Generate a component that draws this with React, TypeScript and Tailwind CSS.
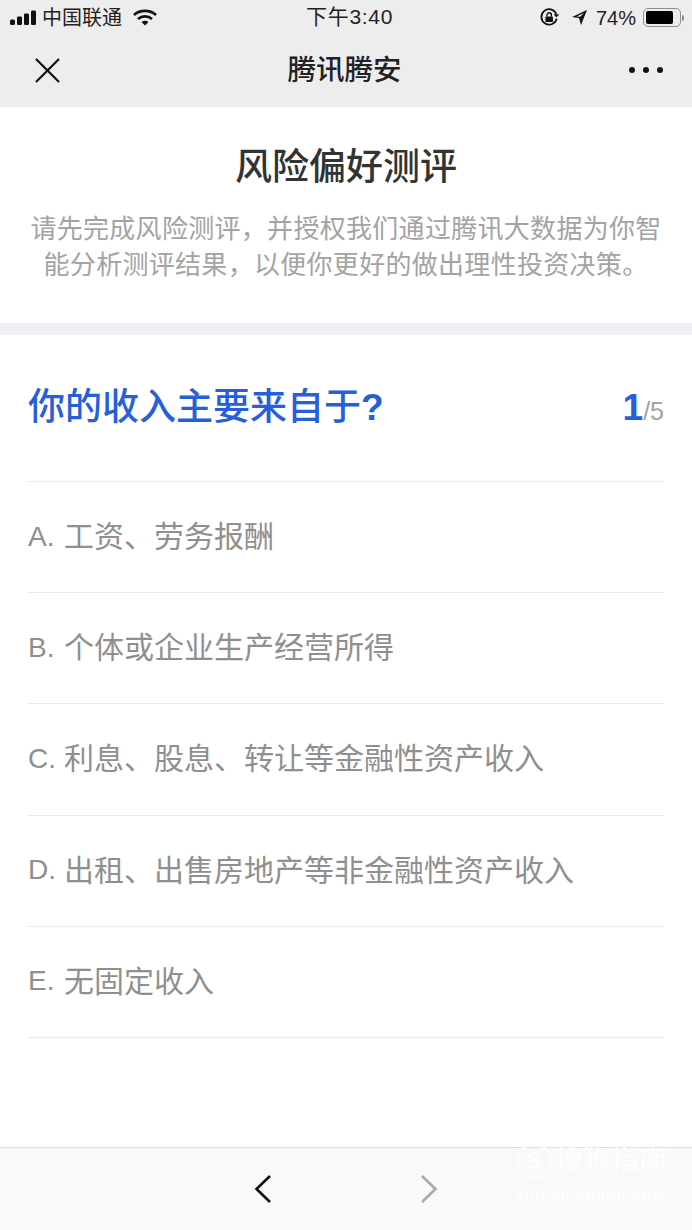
const FONT = '"Liberation Sans", "Noto Sans CJK SC", sans-serif';

const options = [
  ['A.', '工资、劳务报酬'],
  ['B.', '个体或企业生产经营所得'],
  ['C.', '利息、股息、转让等金融性资产收入'],
  ['D.', '出租、出售房地产等非金融性资产收入'],
  ['E.', '无固定收入'],
];

function StatusBar() {
  return (
    <div className="relative flex h-[35px] items-center justify-between pl-[10px] pr-[8px] text-[#1c1c1c]">
      <div className="flex items-center">
        <svg width="27" height="16" viewBox="0 0 27 16" className="block">
          <rect x="0" y="9.5" width="5" height="5.5" rx="1.6" fill="#111" />
          <rect x="7" y="6.5" width="5" height="8.5" rx="1.3" fill="#111" />
          <rect x="14" y="3.5" width="5" height="11.5" rx="1.3" fill="#111" />
          <rect x="21" y="0.5" width="5" height="14.5" rx="1.3" fill="#111" />
        </svg>
        <span className="ml-[5px] text-[20px] leading-none text-[#222]">中国联通</span>
        <svg width="24" height="17" viewBox="0 0 24 17" className="ml-[11px] block">
          <path d="M1 6 C7 0.5 17 0.5 23 6" fill="none" stroke="#111" strokeWidth="2.8" />
          <path d="M5 10 C9 6.5 15 6.5 19 10" fill="none" stroke="#111" strokeWidth="2.8" />
          <path d="M8.5 13 C10.5 11.2 13.5 11.2 15.5 13 L12 16.5 Z" fill="#111" />
        </svg>
      </div>
      <div className="absolute left-[306px] top-[6px] text-[21px] leading-[22px] tracking-[0.7px] text-[#222]">下午3:40</div>
      <div className="flex items-center">
        <svg width="21" height="21" viewBox="0 0 19 19" className="block">
          <path d="M15.6 6.2 A7 7 0 1 0 16 10.5" fill="none" stroke="#111" strokeWidth="1.6" />
          <path d="M13.2 6.5 L18.2 6.5 L15.7 9.6 Z" fill="#111" />
          <rect x="5.8" y="8.6" width="6.8" height="5" rx="0.8" fill="#111" />
          <path d="M7.2 8.6 V7.2 a2 2 0 0 1 4 0 V8.6" fill="none" stroke="#111" strokeWidth="1.2" />
        </svg>
        <svg width="17" height="17" viewBox="0 0 17 17" className="ml-[11px] block">
          <path d="M16 1 L1 8 L8 9 L10 16 Z M13 4 L9.2 7.8 L5.5 7.4 Z" fill="#111" fillRule="evenodd" />
        </svg>
        <span className="ml-[8px] text-[20px] leading-none text-[#222]">74%</span>
        <div className="ml-[7px] flex items-center">
          <div className="flex h-[19px] w-[38px] items-center rounded-[5px] border border-[#8f8f8f] p-[2px]">
            <div className="h-full w-[27px] rounded-[2px] bg-black" />
          </div>
          <div className="ml-[1px] h-[6px] w-[2px] rounded-r-sm bg-[#8f8f8f]" />
        </div>
      </div>
    </div>
  );
}

function NavBar() {
  return (
    <div className="flex h-[72px] items-center justify-between pb-[2px] pl-[35px] pr-[29px]">
      <svg width="25" height="25" viewBox="0 0 25 25" className="block">
        <path d="M1 1 L24 24 M24 1 L1 24" stroke="#111" strokeWidth="2.2" fill="none" />
      </svg>
      <div className="text-[28.5px] font-medium leading-[36px] text-[#222]">腾讯腾安</div>
      <div className="flex w-[34px] justify-between">
        <span className="h-[6px] w-[6px] rounded-full bg-[#111]" />
        <span className="h-[6px] w-[6px] rounded-full bg-[#111]" />
        <span className="h-[6px] w-[6px] rounded-full bg-[#111]" />
      </div>
    </div>
  );
}

export default function App() {
  return (
    <div className="relative flex h-[1230px] w-[692px] flex-col overflow-hidden bg-white" style={{ fontFamily: FONT }}>
      <div className="bg-[#ededed]">
        <StatusBar />
        <NavBar />
      </div>

      <div className="flex h-[228px] flex-col items-center border-b-[12px] border-[#efeff4] pt-[38px]">
        <h1 className="text-[37px] font-medium leading-[46px] text-[#333]">风险偏好测评</h1>
        <p className="mt-[20px] w-[640px] text-center text-[26px] leading-[36px] tracking-[0.3px] text-[#a3a3a3]">
          请先完成风险测评，并授权我们通过腾讯大数据为你智能分析测评结果，以便你更好的做出理性投资决策。
        </p>
      </div>

      <div className="mx-[28px] flex h-[147px] items-center justify-between border-b border-[#ebebeb]">
        <div className="text-[37px] font-medium leading-[46px] text-[#2560d8]">
          你的收入主要来自于<span className="font-bold">?</span>
        </div>
        <div className="flex items-baseline">
          <span className="text-[37px] font-bold leading-[46px] text-[#2560d8]">1</span>
          <span className="text-[25px] font-light text-[#a3a3a3]">/5</span>
        </div>
      </div>

      <div className="mx-[28px]">
        {options.map(([k, o]) => (
          <div key={k} className="flex h-[111.2px] items-center border-b border-[#ebebeb] pb-[1px] text-[#8f8f8f]">
            <span className="w-[36px] text-[28px]">{k}</span>
            <span className="text-[30px]">{o}</span>
          </div>
        ))}
      </div>

      <div className="relative mt-auto h-[83px] border-t border-[#dfdfdf] bg-[#f9f9fb]">
        <svg width="18" height="30" viewBox="0 0 18 30" className="absolute left-[254px] top-[26px]">
          <path d="M16 2 L2.5 15 L16 28" stroke="#111" strokeWidth="2.6" fill="none" />
        </svg>
        <svg width="18" height="30" viewBox="0 0 18 30" className="absolute left-[420px] top-[26px]">
          <path d="M2 2 L15.5 15 L2 28" stroke="#aaa" strokeWidth="2.6" fill="none" />
        </svg>
        <div className="absolute left-[515px] top-[-6px] flex items-center text-white opacity-80">
          <svg width="38" height="38" viewBox="0 0 38 38" className="block">
            <circle cx="19" cy="19" r="17" fill="none" stroke="#fff" strokeWidth="2.5" />
            <text x="19" y="27" textAnchor="middle" fontSize="24" fontWeight="700" fill="#fff">S</text>
          </svg>
          <span className="ml-[2px] text-[28px] leading-none">搜狗指南</span>
        </div>
        <div className="absolute left-[516px] top-[40px] text-[15px] font-bold leading-none tracking-[1.2px] text-white opacity-80">
          zhinan.sogou.com
        </div>
      </div>
    </div>
  );
}
